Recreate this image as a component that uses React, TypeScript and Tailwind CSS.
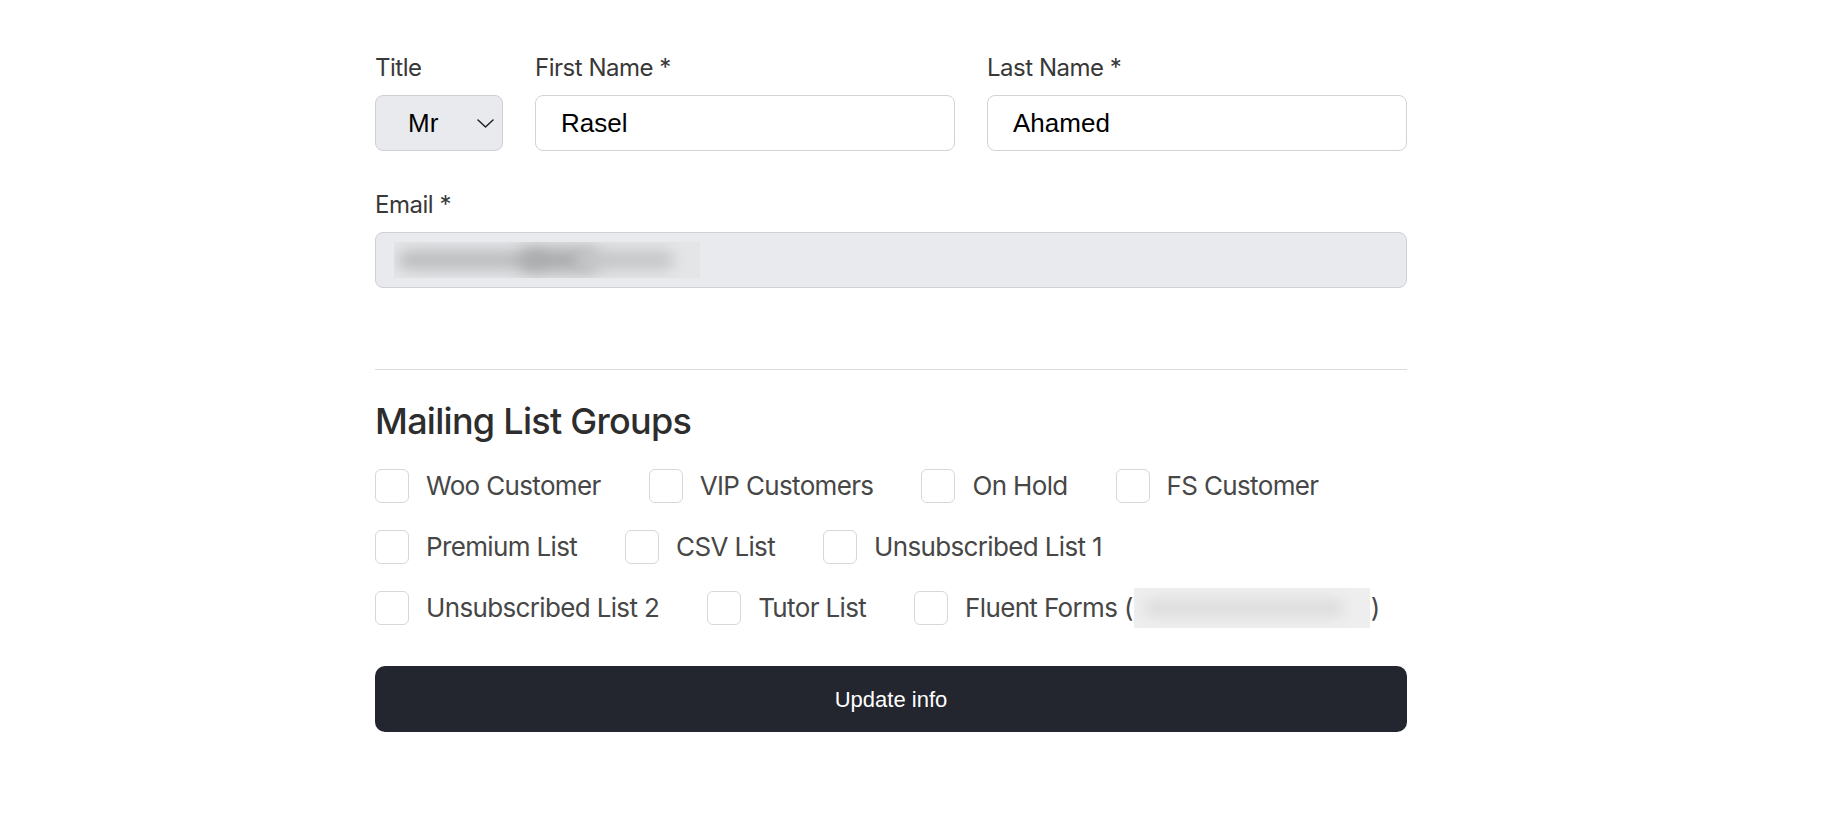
import React from 'react';

const groups = [
  'Woo Customer',
  'VIP Customers',
  'On Hold',
  'FS Customer',
  'Premium List',
  'CSV List',
  'Unsubscribed List 1',
  'Unsubscribed List 2',
  'Tutor List',
];

const labelClass =
  "block h-8 pt-px text-[24px] leading-8 tracking-[-0.02em] text-[#383838] font-['Inter',sans-serif]";
const inputClass =
  "h-14 w-full rounded-lg border border-[#d2d3d6] bg-white px-[25px] text-[26px] text-black font-['Liberation_Sans',Arial,sans-serif] outline-none";

const Check: React.FC<{ label: React.ReactNode }> = ({ label }) => (
  <label className="flex h-[34px] items-center gap-[17px]">
    <span className="h-[34px] w-[34px] shrink-0 rounded-md border border-[#d6d7da] bg-white" />
    <span className="text-[26px] leading-none tracking-[-0.025em] text-[#474747] font-['Inter',sans-serif]">
      {label}
    </span>
  </label>
);

export default function App() {
  return (
    <div className="min-h-screen bg-white">
      <form className="ml-[375px] w-[1032px] pt-[51px]">
        <div className="flex gap-8">
          <div className="w-32 shrink-0">
            <span className={labelClass}>Title</span>
            <div className="mt-3 flex h-14 items-center justify-between rounded-lg border border-[#cfd0d3] bg-[#e9eaed] pl-8 pr-2">
              <span className="text-[26px] text-black font-['Liberation_Sans',Arial,sans-serif]">Mr</span>
              <svg width="17" height="9" viewBox="0 0 17 9" fill="none">
                <path d="M1 1l7.5 7 7.5-7" stroke="#222" strokeWidth="1.5" strokeLinecap="round" strokeLinejoin="round" />
              </svg>
            </div>
          </div>
          <div className="flex-1">
            <span className={labelClass}>First Name *</span>
            <div className="mt-3">
              <input className={inputClass} defaultValue="Rasel" />
            </div>
          </div>
          <div className="flex-1">
            <span className={labelClass}>Last Name *</span>
            <div className="mt-3">
              <input className={inputClass} defaultValue="Ahamed" />
            </div>
          </div>
        </div>

        <div className="mt-[37px]">
          <span className={labelClass}>Email *</span>
          <div className="mt-3 flex h-14 items-center rounded-lg border border-[#cfd0d3] bg-[#e9eaed] pl-[18px]">
            <div className="relative h-9 w-[306px] overflow-hidden bg-[#e4e5e7]">
              <div className="absolute left-[4px] top-[8px] h-5 w-[150px] rounded-full bg-[#bdbec0] blur-[7px]" />
              <div className="absolute left-[125px] top-[6px] h-6 w-[80px] rounded-full bg-[#a9aaac] blur-[8px]" />
              <div className="absolute left-[180px] top-[8px] h-5 w-[100px] rounded-full bg-[#c6c7c9] blur-[7px]" />
            </div>
          </div>
        </div>

        <div className="mt-[81px] h-px bg-[#dcdcde]" />

        <h2 className="mt-[29px] h-11 text-[36px] leading-[44px] font-medium tracking-[-0.02em] text-[#2d2d2d] font-['Inter',sans-serif]">
          Mailing List Groups
        </h2>

        <div className="mt-[26px] flex flex-wrap gap-x-[48px] gap-y-[27px]">
          {groups.map((g) => (
            <Check key={g} label={g} />
          ))}
          <Check
            label={
              <span className="flex items-center">
                Fluent Forms (
                <span className="relative mx-px inline-block h-10 w-[236px] overflow-hidden bg-[#eeeeee]">
                  <span className="absolute left-[10px] top-[10px] h-5 w-[200px] rounded-full bg-[#dfdfdf] blur-[6px]" />
                </span>
                )
              </span>
            }
          />
        </div>

        <button
          type="button"
          className="mt-[41px] flex h-[66px] w-full items-center justify-center rounded-[10px] bg-[#23252f] text-[22px] text-white font-['Liberation_Sans',Arial,sans-serif]"
        >
          Update info
        </button>
      </form>
    </div>
  );
}
